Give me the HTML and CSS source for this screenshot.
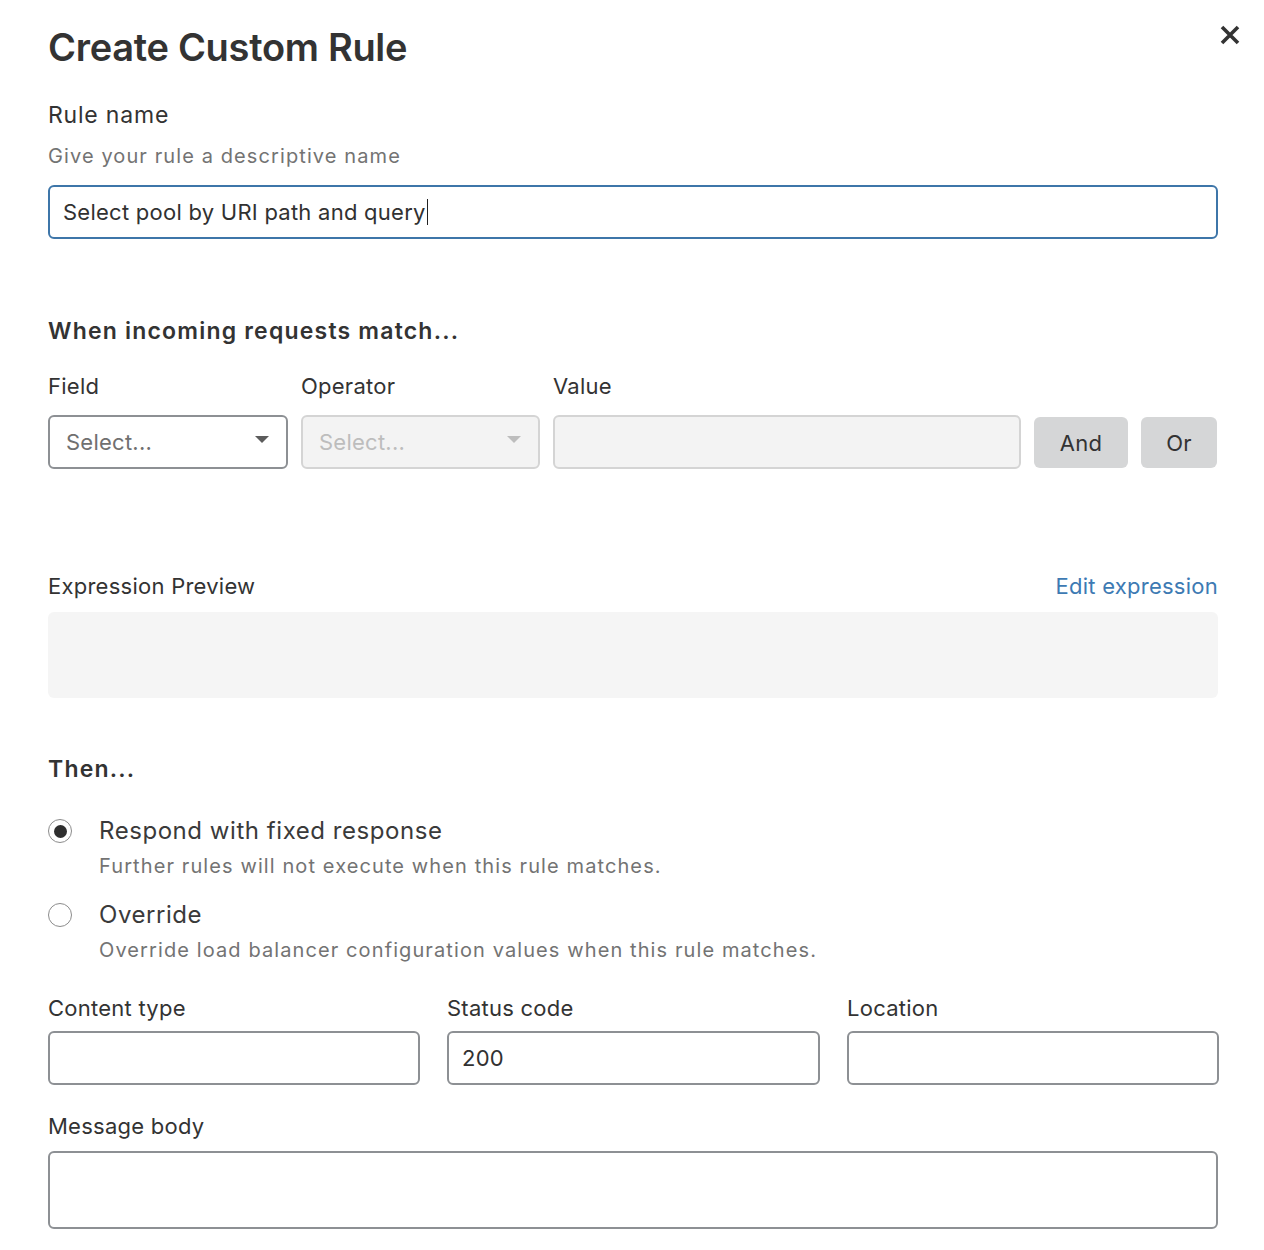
FILE: index.html
```html
<!DOCTYPE html>
<html>
<head>
<meta charset="utf-8">
<link rel="stylesheet" href="styles.css">
</head>
<body>
<div class="modal">
  <div class="header">
    <h1 class="title">Create Custom Rule</h1>
    <button class="close" aria-label="Close">
      <svg width="22" height="22" viewBox="0 0 22 22"><path d="M3 3L19 19M19 3L3 19" stroke="#333" stroke-width="3.6" stroke-linecap="butt"/></svg>
    </button>
  </div>

  <div class="label rule-label">Rule name</div>
  <div class="hint">Give your rule a descriptive name</div>
  <div class="input focused">Select pool by URI path and query<span class="caret"></span></div>

  <h2 class="section when">When incoming requests match...</h2>
  <div class="match-grid">
    <div class="label">Field</div>
    <div class="label">Operator</div>
    <div class="label">Value</div>
    <div></div>
    <div></div>
    <div class="select"><span>Select...</span><span class="arrow"></span></div>
    <div class="select disabled"><span>Select...</span><span class="arrow"></span></div>
    <div class="value-box"></div>
    <button class="btn">And</button>
    <button class="btn">Or</button>
  </div>

  <div class="preview-head">
    <div class="label">Expression Preview</div>
    <a class="link">Edit expression</a>
  </div>
  <div class="preview"></div>

  <h2 class="section then">Then...</h2>

  <div class="radio-row first">
    <span class="radio checked"></span>
    <div class="radio-text">
      <div class="radio-label">Respond with fixed response</div>
      <div class="hint">Further rules will not execute when this rule matches.</div>
    </div>
  </div>
  <div class="radio-row second">
    <span class="radio"></span>
    <div class="radio-text">
      <div class="radio-label">Override</div>
      <div class="hint">Override load balancer configuration values when this rule matches.</div>
    </div>
  </div>

  <div class="three-grid">
    <div class="field">
      <div class="label">Content type</div>
      <div class="input plain"></div>
    </div>
    <div class="field">
      <div class="label">Status code</div>
      <div class="input plain">200</div>
    </div>
    <div class="field">
      <div class="label">Location</div>
      <div class="input plain"></div>
    </div>
  </div>

  <div class="label body-label">Message body</div>
  <div class="textarea"></div>
</div>
</body>
</html>
```

FILE: styles.css
```css
* { box-sizing: border-box; }
body {
  margin: 0;
  background: #fff;
  font-family: Inter, "Noto Sans", "Liberation Sans", sans-serif;
  color: #313131;
}
.modal {
  width: 1264px;
  padding: 25px 46px 0 48px;
}
.header {
  display: flex;
  justify-content: space-between;
  align-items: flex-start;
}
.title {
  margin: 0;
  font-size: 38px;
  line-height: 44px;
  font-weight: 600;
  letter-spacing: -0.3px;
  color: #333;
}
.close {
  border: 0;
  background: none;
  padding: 0;
  margin: -1px -23px 0 0;
  width: 22px;
  height: 22px;
  display: flex;
}
.label {
  font-size: 22px;
  line-height: 28px;
  letter-spacing: 0.25px;
  color: #333;
}
.rule-label {
  margin-top: 32px;
  font-size: 23px;
  letter-spacing: 0.8px;
}
.hint {
  font-size: 20px;
  line-height: 28px;
  letter-spacing: 1.1px;
  color: #737373;
}
.rule-label + .hint { margin-top: 13px; }
.input {
  height: 54px;
  border: 2px solid #8d9094;
  border-radius: 6px;
  font-size: 22px;
  letter-spacing: 0.25px;
  line-height: 28px;
  padding: 11px 13px;
  color: #313131;
  display: flex;
  align-items: center;
}
.input.focused {
  margin-top: 15px;
  border-color: #3e76a9;
}
.caret {
  display: inline-block;
  width: 1.5px;
  height: 26px;
  background: #222;
  margin-left: 1px;
}
.section {
  margin: 0;
  font-size: 23px;
  line-height: 28px;
  font-weight: 600;
  letter-spacing: 1.2px;
  color: #333;
}
.when { margin-top: 78px; }
.match-grid {
  margin-top: 27px;
  display: grid;
  grid-template-columns: 240px 239px 468px 94px 76px;
  column-gap: 13px;
  row-gap: 15px;
  width: 1170px;
}
.select {
  height: 54px;
  border: 2px solid #8d9094;
  border-radius: 6px;
  display: flex;
  align-items: center;
  justify-content: space-between;
  padding: 0 17px 0 16px;
  font-size: 22px;
  letter-spacing: 0.25px;
  color: #707070;
}
.select .arrow {
  width: 0; height: 0;
  border-left: 7px solid transparent;
  border-right: 7px solid transparent;
  border-top: 7px solid #5c5c5c;
  margin-top: -6px;
}
.select.disabled {
  border-color: #d4d4d4;
  background: #f3f3f3;
  color: #bdbdbd;
}
.select.disabled .arrow { border-top-color: #bdbdbd; }
.value-box {
  height: 54px;
  border: 2px solid #d4d4d4;
  border-radius: 6px;
  background: #f3f3f3;
}
.btn {
  height: 51px;
  margin-top: 2px;
  border: 0;
  border-radius: 6px;
  background: #d5d6d7;
  font-family: inherit;
  font-size: 22px;
  letter-spacing: 0.25px;
  color: #333;
  padding: 0;
}
.preview-head {
  margin-top: 103px;
  display: flex;
  justify-content: space-between;
  width: 1170px;
}
.link {
  font-size: 22px;
  line-height: 28px;
  letter-spacing: 0.25px;
  color: #3d7ab3;
}
.preview {
  margin-top: 12px;
  width: 1170px;
  height: 86px;
  background: #f5f5f5;
  border-radius: 6px;
}
.then { margin-top: 57px; }
.radio-row {
  display: flex;
  gap: 27px;
}
.radio-row.first { margin-top: 32px; }
.radio-row.second { margin-top: 19px; }
.radio {
  flex: none;
  width: 24px;
  height: 24px;
  margin-top: 4px;
  border: 1.5px solid #8c8c8c;
  border-radius: 50%;
  display: flex;
  align-items: center;
  justify-content: center;
  background: #fff;
}
.radio.checked::after {
  content: "";
  width: 13px;
  height: 13px;
  border-radius: 50%;
  background: #2f2f2f;
}
.radio-label {
  font-size: 24px;
  line-height: 32px;
  letter-spacing: 0.55px;
  color: #3a3a3a;
}
.radio-text .hint { margin-top: 5px; }
.three-grid {
  margin-top: 30px;
  display: grid;
  grid-template-columns: 372px 373px 372px;
  column-gap: 27px;
  width: 1170px;
}
.field .input { margin-top: 9px; }
.body-label { margin-top: 27px; }
.textarea {
  margin-top: 11px;
  width: 1170px;
  height: 78px;
  border: 2px solid #8d9094;
  border-radius: 6px;
}
```
